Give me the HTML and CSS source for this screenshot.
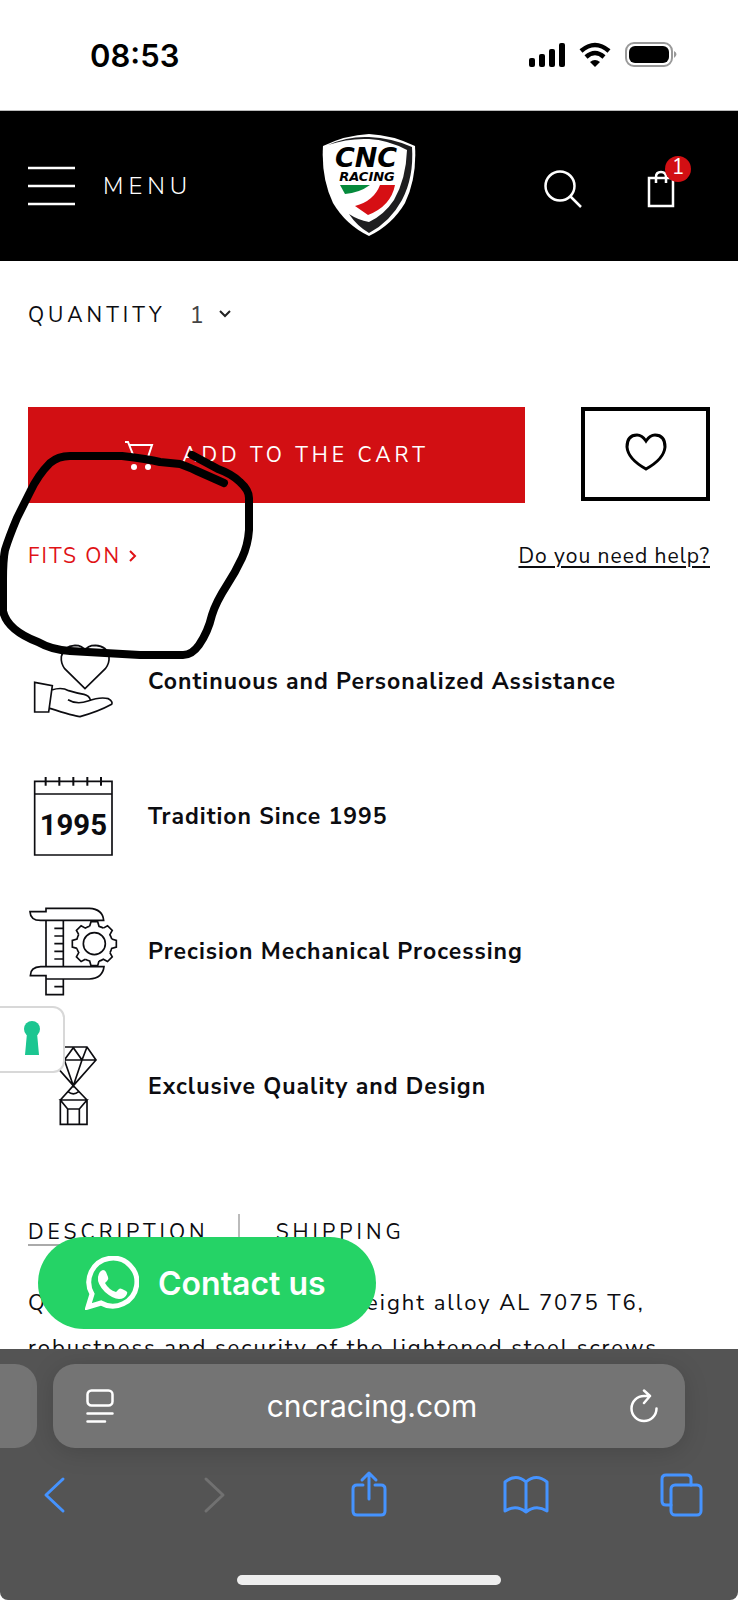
FILE: index.html
```html
<!DOCTYPE html>
<html lang="en">
<head>
  <meta charset="UTF-8">
  <meta name="viewport" content="width=device-width, initial-scale=1.0">
  <title>CNC Racing</title>
  <link rel="stylesheet" href="styles.css">
</head>
<body>
  <div class="status-bar">
    <span class="time">08:53</span>
    <svg class="status-icons" width="150" height="26" viewBox="0 0 150 26">
      <rect x="0" y="16" width="6" height="9" rx="2"/>
      <rect x="10" y="12" width="6" height="13" rx="2"/>
      <rect x="20" y="7" width="6" height="18" rx="2"/>
      <rect x="30" y="1" width="6" height="24" rx="2"/>
      <path d="M66 25l-5-5q5-4 10 0z"/>
      <path d="M52 9q14-12 28 0M57 15q9-8 18 0" fill="none" stroke="#000" stroke-width="4.5"/>
      <rect x="97" y="1" width="46" height="23" rx="8" fill="none" stroke="#999" stroke-width="2"/>
      <rect x="100" y="4" width="40" height="17" rx="6"/>
      <path d="M145 9q5 3 0 7z" fill="#999"/>
    </svg>
  </div>

  <header class="header">
    <button class="menu-btn" type="button">
      <svg width="47" height="40" viewBox="0 0 47 40" stroke="#fff" stroke-width="2.5"><path d="M0 2h47M0 20h47M0 38h47"/></svg>
      <span>MENU</span>
    </button>
    <a class="logo" href="#" aria-label="CNC Racing">
      <svg width="94" height="104" viewBox="0 0 94 104">
        <path d="M47 1Q70 2 93 13Q95 45 83 70Q70 92 47 103Q24 92 11 70Q-1 45 1 13Q24 2 47 1z" fill="#fff"/>
        <path d="M6 12Q26 3 47 4Q70 5 90 14Q92 44 80 67Q68 89 47 100Q35 93 27 81Q36 87 47 89Q62 82 72 67Q84 46 85 17Q66 7 47 6Q26 5 6 12z" fill="#1d1d1f"/>
        <text class="logo-cnc" x="44" y="34" text-anchor="middle">CNC</text>
        <text class="logo-racing" x="45" y="48" text-anchor="middle">RACING</text>
        <path d="M18 52H48Q37 60 23 61z" fill="#058a3c"/>
        <path d="M58 52H73Q69 73 46 82L33 73Q52 68 58 52z" fill="#d60f14"/>
      </svg>
    </a>
    <div class="header-actions">
      <button class="icon-btn" type="button" aria-label="Search">
        <svg width="38" height="38" viewBox="0 0 38 38" fill="none" stroke="#fff" stroke-width="2.5"><circle cx="16" cy="16" r="14.5"/><path d="M26 26l11 11"/></svg>
      </button>
      <button class="icon-btn" type="button" aria-label="Bag">
        <svg width="28" height="38" viewBox="0 0 28 38" fill="none" stroke="#fff" stroke-width="2.5"><path d="M2 8H26V36H2zM9 13V7Q9 2 14 2T19 7V13"/></svg>
        <span class="badge">1</span>
      </button>
    </div>
  </header>

  <main class="product">
    <div class="quantity">
      <label for="qty">QUANTITY</label>
      <div class="select-wrap">
        <select id="qty"><option>1</option><option>2</option><option>3</option></select>
        <svg width="12" height="8" viewBox="0 0 12 8" fill="none" stroke="#222" stroke-width="2"><path d="M1 1l5 5 5-5"/></svg>
      </div>
    </div>

    <div class="buy-row">
      <button class="add-btn" type="button">
        <svg width="30" height="30" viewBox="0 0 30 30" fill="none" stroke="#fff" stroke-width="2"><path d="M1 2H4L10 17H24L28 5H6"/><circle cx="10" cy="27" r="3" fill="#fff" stroke="none"/><circle cx="24" cy="27" r="3" fill="#fff" stroke="none"/></svg>
        <span>ADD TO THE CART</span>
      </button>
      <button class="wish-btn" type="button" aria-label="Wishlist">
        <svg width="42" height="38" viewBox="0 0 42 38" fill="none" stroke="#000" stroke-width="3"><path d="M21 8Q17 2 12 2Q2 2 2 14Q3 26 21 36Q39 26 40 14Q40 2 30 2Q25 2 21 8z"/></svg>
      </button>
    </div>

    <div class="links-row">
      <a class="fits" href="#">FITS ON
        <svg width="8" height="12" viewBox="0 0 8 12" fill="none" stroke="#e01216" stroke-width="2"><path d="M1 1l5 5-5 5"/></svg>
      </a>
      <a class="help" href="#">Do you need help?</a>
    </div>

    <ul class="features">
      <li>
        <!-- hand holding a heart -->
        <svg viewBox="84 18 270 270">
          <path d="M255 176L194 116Q182 100 184 80Q190 48 225 46Q248 46 255 62Q262 46 286 46Q322 48 327 80Q329 100 316 116z"/>
          <path d="M104 157L157 167L146 246H104zM155 180Q185 170 206 182Q228 189 252 193Q268 197 271 210M204 209Q230 225 264 213Q300 200 325 206Q340 215 335 223Q295 245 240 260Q222 258 150 235"/>
        </svg>
        <span>Continuous and Personalized Assistance</span>
      </li>
      <li>
        <svg viewBox="84 423 270 270">
          <path d="M104 454H336V675H104zM104 492H336"/>
          <path d="M137 441V467M178 441V467M220 441V467M262 441V467M303 441V467" stroke-width="6"/>
          <text class="year" x="220" y="615" text-anchor="middle">1995</text>
        </svg>
        <span>Tradition Since 1995</span>
      </li>
      <li>
        <!-- caliper and gear -->
        <svg viewBox="84 48 270 270">
          <path d="M90 65H138V55H268Q308 57 311 91H122Q91 91 90 65zM91 257H138V267H268Q308 265 312 230H122Q91 231 91 257zM138 91V230M190 91V230M138 267V314H190V267M163 115H190M163 138H190M163 161H190M163 184H190M163 207H190M163 290H190"/>
          <g transform="translate(283 161)">
            <circle r="33"/>
            <path id="tooth" d="M-14-52L-10-66H10L14-52A54 54 0 0 1 27-47"/>
            <use href="#tooth" transform="rotate(45)"/>
            <use href="#tooth" transform="rotate(90)"/>
            <use href="#tooth" transform="rotate(135)"/>
            <use href="#tooth" transform="rotate(180)"/>
            <use href="#tooth" transform="rotate(225)"/>
            <use href="#tooth" transform="rotate(270)"/>
            <use href="#tooth" transform="rotate(315)"/>
          </g>
        </svg>
        <span>Precision Mechanical Processing</span>
      </li>
      <li>
        <!-- diamond on a pedestal -->
        <svg viewBox="84 456 270 270">
          <path d="M179 474H261L288 513L220 590L152 513zM152 513H288M193 513L220 476L246 513L220 590zM246 513L261 474M193 513L179 474M220 590L181 633V706H261V633zM181 633H261L238 660H203zM203 660V706M238 660V706M204 608Q220 621 236 608"/>
        </svg>
        <span>Exclusive Quality and Design</span>
      </li>
    </ul>

    <nav class="tabs">
      <a class="active" href="#">DESCRIPTION</a>
      <a href="#">SHIPPING</a>
    </nav>
    <p class="description">Quality materials: the lightweight alloy AL 7075 T6,<br>robustness and security of the lightened steel screws</p>
  </main>

  <button class="privacy-btn" type="button" aria-label="Privacy settings">
    <svg width="16" height="34" viewBox="0 0 16 34" fill="#1cc691"><circle cx="8" cy="8" r="8"/><path d="M3 12H13L15 34H1z"/></svg>
  </button>

  <a class="whatsapp" href="#">
    <svg width="54" height="54" viewBox="0 0 54 54">
      <path d="M3 51L7 38A24 24 0 1 1 16 47z" fill="none" stroke="#fff" stroke-width="5"/>
      <path d="M18 14Q20 14 21 16L23 21Q24 23 22 25L20 27Q24 34 31 36L34 33Q35 32 37 33L41 35Q43 36 42 38Q40 43 34 43Q28 43 20 36Q12 28 13 21Q14 15 18 14z" fill="#fff"/>
    </svg>
    <span>Contact us</span>
  </a>

  <!-- hand-drawn circle around the "fits on" link -->
  <svg class="scribble" width="260" height="220" viewBox="0 445 260 220">
    <path d="M192 455L218 469Q232 474 240 482Q249 490 249 498V530Q248 545 242 558Q235 573 227 585Q216 602 212 615Q208 632 199 645Q192 655 183 655H140L70 651Q52 650 38 642Q7 630 3 611V580Q3 560 5 550Q9 537 17 518L30 492Q38 475 50 463Q58 456 70 456H122Q148 459 160 462L180 464Q186 466 197 471L224 483"/>
  </svg>

  <footer class="browser">
    <div class="address-row">
      <div class="prev-tab"></div>
      <div class="address">
        <button type="button" aria-label="Page menu">
          <svg width="28" height="34" viewBox="0 0 28 34" fill="none" stroke="#fff" stroke-width="2.5" stroke-linecap="round"><rect x="1.5" y="1.5" width="25" height="15" rx="4"/><path d="M1.5 24.5H26.5M1.5 32.5H19"/></svg>
        </button>
        <input type="text" value="cncracing.com" aria-label="Address">
        <button type="button" aria-label="Reload">
          <svg width="28" height="34" viewBox="0 0 28 34" fill="none" stroke="#fff" stroke-width="2.5" stroke-linecap="round" stroke-linejoin="round"><path d="M26.5 19.5A12.5 12.5 0 1 1 14 7H20M14 1.5L20 7L14 14"/></svg>
        </button>
      </div>
    </div>
    <div class="toolbar">
      <button type="button" aria-label="Back"><svg viewBox="0 0 48 48"><path d="M33 9L16 25L33 41"/></svg></button>
      <button type="button" aria-label="Forward" disabled><svg viewBox="0 0 48 48"><path d="M18 9L35 25L18 41"/></svg></button>
      <button type="button" aria-label="Share"><svg viewBox="0 0 48 48"><path d="M18 15H12Q8 15 8 19V41Q8 45 12 45H36Q40 45 40 41V19Q40 15 36 15H30M24 29V3M17 10L24 3L31 10"/></svg></button>
      <button type="button" aria-label="Bookmarks"><svg viewBox="0 0 48 48"><path d="M23 42V12Q13 3 2 12V41Q13 34 23 42Q33 34 44 41V12Q33 3 23 12"/></svg></button>
      <button type="button" aria-label="Tabs"><svg viewBox="0 0 48 48"><path d="M11 35H6Q2 35 2 31V9Q2 5 6 5H27Q31 5 31 9V15"/><rect x="11" y="15" width="30" height="30" rx="4"/></svg></button>
    </div>
    <div class="home-bar"></div>
  </footer>
</body>
</html>
```
FILE: styles.css
```css
* {
  box-sizing: border-box;
}
body {
  margin: 0;
  height: 100vh;
  display: flex;
  flex-direction: column;
  position: relative;
  overflow: hidden;
  background: #fff;
  color: #0c0c10;
  font-family: "Nunito Sans", Lato, "Open Sans", sans-serif;
  font-size: 21px;
}
button {
  background: none;
  border: none;
  padding: 0;
  color: inherit;
  font: inherit;
  cursor: pointer;
}
a {
  color: inherit;
  text-decoration: none;
}
svg {
  display: block;
  flex-shrink: 0;
}

.status-bar {
  height: 111px;
  flex-shrink: 0;
  display: flex;
  align-items: center;
  justify-content: space-between;
  padding: 0 59px 0 90px;
  border-bottom: 1px solid #bbb;
}
.time {
  font-family: Inter, sans-serif;
  font-size: 31px;
  font-weight: 600;
  color: #000;
}

.header {
  height: 150px;
  flex-shrink: 0;
  display: grid;
  grid-template-columns: 1fr auto 1fr;
  align-items: center;
  padding: 0 28px;
  background: #000;
  color: #fff;
}
.menu-btn {
  display: flex;
  align-items: center;
  gap: 28px;
  font-size: 24px;
  font-weight: 300;
  letter-spacing: 5px;
}
.logo svg {
  margin-bottom: 3px;
}
.logo-cnc {
  font: italic bold 27px "DejaVu Sans", sans-serif;
}
.logo-racing {
  font: italic bold 13px "DejaVu Sans", sans-serif;
}
.header-actions {
  display: flex;
  justify-content: flex-end;
  gap: 65px;
  padding: 5px 35px 0 0;
}
.icon-btn {
  position: relative;
}
.badge {
  position: absolute;
  top: -14px;
  right: -16px;
  width: 26px;
  height: 26px;
  border-radius: 50%;
  background: #d20f13;
  line-height: 22px;
}

.product {
  flex: 1;
  min-height: 0;
  overflow: hidden;
  padding: 38px 28px 0;
}
.quantity {
  display: flex;
  align-items: center;
  gap: 24px;
  height: 32px;
}
.quantity label {
  letter-spacing: 4px;
}
.select-wrap {
  position: relative;
}
.select-wrap select {
  appearance: none;
  width: 44px;
  border: none;
  background: none;
  padding: 0;
  color: #444;
  font: inherit;
  font-size: 24px;
}
.select-wrap svg {
  position: absolute;
  right: 3px;
  top: 11px;
  pointer-events: none;
}

.buy-row {
  display: flex;
  align-items: flex-start;
  gap: 56px;
  margin-top: 76px;
}
.add-btn {
  flex: 1;
  height: 96px;
  display: flex;
  align-items: center;
  justify-content: center;
  gap: 28px;
  background: #d20f13;
  color: #fff;
  letter-spacing: 4px;
}
.wish-btn {
  width: 129px;
  height: 94px;
  display: flex;
  align-items: center;
  justify-content: center;
  padding-bottom: 5px;
  border: 4px solid #000;
}

.links-row {
  display: flex;
  align-items: center;
  justify-content: space-between;
  margin-top: 37px;
  line-height: 32px;
}
.fits {
  display: flex;
  align-items: center;
  gap: 8px;
  color: #e01216;
  letter-spacing: 2px;
}
.help {
  letter-spacing: 1px;
  text-decoration: underline;
  text-decoration-thickness: 2px;
  text-underline-offset: 3px;
}

.features {
  list-style: none;
  margin: 64px 0 0;
  padding: 0;
  display: grid;
  gap: 45px;
}
.features li {
  display: flex;
  align-items: center;
  gap: 30px;
  font-size: 23px;
  font-weight: 700;
  letter-spacing: 1px;
}
.features svg {
  width: 90px;
  height: 90px;
  fill: none;
  stroke: #0c0c10;
  stroke-width: 5px;
}
.features .year {
  font: bold 88px Roboto, sans-serif;
  letter-spacing: 0;
  fill: #0c0c10;
  stroke: none;
}

.tabs {
  display: flex;
  margin-top: 83px;
  letter-spacing: 4px;
}
.tabs a {
  padding-top: 4px;
  height: 32px;
}
.tabs a + a {
  height: 40px;
  margin-left: 29px;
  padding-left: 36px;
  border-left: 2px solid #bbb;
}
.tabs .active {
  border-bottom: 2px solid #aaa;
}
.description {
  margin: 27px 0 0;
  font-size: 22px;
  line-height: 45px;
  letter-spacing: 2px;
}

.privacy-btn {
  position: absolute;
  left: 0;
  top: 1006px;
  width: 65px;
  height: 67px;
  display: flex;
  align-items: center;
  justify-content: center;
  padding-bottom: 4px;
  background: #fff;
  border: 2px solid #d8d8d8;
  border-left: none;
  border-radius: 0 12px 12px 0;
}
.whatsapp {
  position: absolute;
  left: 38px;
  bottom: 271px;
  height: 92px;
  display: flex;
  align-items: center;
  gap: 19px;
  padding: 0 50px 0 47px;
  border-radius: 46px;
  background: #25d366;
  color: #fff;
  font-family: Inter, sans-serif;
  font-size: 32px;
  font-weight: 600;
}
.scribble {
  position: absolute;
  left: 0;
  top: 445px;
  fill: none;
  stroke: #000;
  stroke-width: 8px;
  stroke-linecap: round;
  stroke-linejoin: round;
  pointer-events: none;
}

.browser {
  height: 251px;
  flex-shrink: 0;
  display: flex;
  flex-direction: column;
  padding-top: 15px;
  background: #545454;
  border-radius: 0 0 8px 8px;
}
.address-row {
  display: flex;
  gap: 16px;
  padding-right: 53px;
}
.prev-tab {
  width: 37px;
  border-radius: 0 22px 22px 0;
  background: #747474;
}
.address {
  flex: 1;
  min-width: 0;
  height: 84px;
  display: flex;
  align-items: center;
  padding: 0 27px 0 33px;
  border-radius: 22px;
  background: #747474;
  box-shadow: 0 4px 24px rgba(0, 0, 0, 0.15);
}
.address input {
  flex: 1;
  min-width: 0;
  border: none;
  background: none;
  color: #fff;
  font-family: Inter, sans-serif;
  font-size: 30px;
  text-align: center;
}
.toolbar {
  display: flex;
  justify-content: space-between;
  margin-top: 22px;
  padding: 0 30px;
  color: #4593ff;
}
.toolbar svg {
  width: 48px;
  height: 48px;
  fill: none;
  stroke: currentColor;
  stroke-width: 3px;
  stroke-linecap: round;
  stroke-linejoin: round;
}
.toolbar button:disabled {
  color: #717171;
}
.home-bar {
  width: 264px;
  height: 10px;
  margin: auto auto 15px;
  border-radius: 5px;
  background: #eee;
}
```
